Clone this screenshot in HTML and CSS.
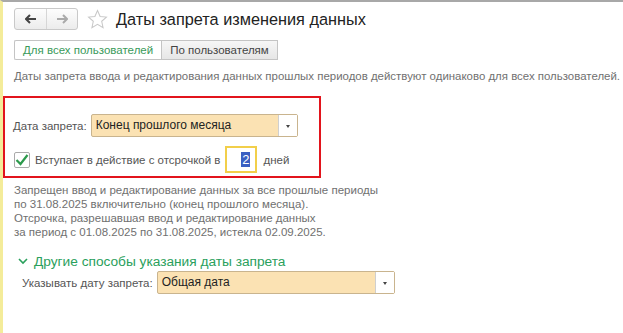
FILE: index.html
```html
<!DOCTYPE html>
<html lang="ru">
<head>
    <meta charset="UTF-8">
    <title>Даты запрета изменения данных</title>
    <link rel="stylesheet" href="styles.css">
</head>
<body>
    <div class="window">
        <div class="header">
            <div class="nav">
                <button class="nav-btn">
                    <svg width="12" height="10" viewBox="0 0 12 10"><path d="M1 5h10M5 1L1 5l4 4" stroke="#444" stroke-width="2" fill="none"/></svg>
                </button>
                <button class="nav-btn">
                    <svg width="12" height="10" viewBox="0 0 12 10"><path d="M1 5h10M7 1l4 4-4 4" stroke="#aaa" stroke-width="2" fill="none"/></svg>
                </button>
            </div>
            <svg class="star" width="21" height="21" viewBox="0 0 20 20"><path d="M10 1.5l2.5 5.6 6 .6-4.5 4 1.3 6-5.3-3.1-5.3 3.1 1.3-6-4.5-4 6-.6z" fill="none" stroke="#c8c8c8" stroke-width="1"/></svg>
            <h1 class="title">Даты запрета изменения данных</h1>
        </div>

        <div class="tabs">
            <div class="tab active">Для всех пользователей</div>
            <div class="tab">По пользователям</div>
        </div>

        <p class="note">Даты запрета ввода и редактирования данных прошлых периодов действуют одинаково для всех пользователей.</p>

        <!-- выделенный блок -->
        <div class="highlight">
            <div class="row">
                <span class="label">Дата запрета:</span>
                <div class="select wide">
                    <span class="select-text">Конец прошлого месяца</span>
                    <span class="select-btn"><i class="arrow"></i></span>
                </div>
            </div>
            <div class="row delay">
                <span class="checkbox">
                    <svg width="14" height="12" viewBox="0 0 14 12"><path d="M1.5 6l4 4 7-9" stroke="#2c9a4c" stroke-width="2.2" fill="none"/></svg>
                </span>
                <span class="label">Вступает в действие с отсрочкой в</span>
                <div class="days"><span class="sel">2</span></div>
                <span class="label">дней</span>
            </div>
        </div>

        <div class="info">
            <p>Запрещен ввод и редактирование данных за все прошлые периоды<br>по 31.08.2025 включительно (конец прошлого месяца).</p>
            <p>Отсрочка, разрешавшая ввод и редактирование данных<br>за период с 01.08.2025 по 31.08.2025, истекла 02.09.2025.</p>
        </div>

        <div class="group">
            <div class="group-title">
                <svg width="10" height="7" viewBox="0 0 10 7"><path d="M1 1l4 4 4-4" stroke="#2aa05c" stroke-width="1.6" fill="none"/></svg>
                Другие способы указания даты запрета
            </div>
            <div class="row">
                <span class="label">Указывать дату запрета:</span>
                <div class="select long">
                    <span class="select-text">Общая дата</span>
                    <span class="select-btn"><i class="arrow"></i></span>
                </div>
            </div>
        </div>
    </div>
</body>
</html>
```

FILE: styles.css
```css
body {
    margin: 0;
    font-family: "Liberation Sans", Arial, sans-serif;
    background: #fff;
    color: #444;
}
.window {
    width: 623px;
    height: 333px;
    box-sizing: border-box;
    border-top: 2px solid #a8a8a8;
    border-left: 3px solid #f4ec9a;
    padding: 7px 0 0 11px;
    overflow: hidden;
}
.header {
    display: flex;
    align-items: center;
    height: 20px;
}
.nav {
    display: flex;
    border: 1px solid #c9c9c9;
    border-radius: 3px;
    background: linear-gradient(#fdfdfd, #ececec);
}
.nav-btn {
    width: 31px;
    height: 20px;
    border: 0;
    background: none;
    padding: 0;
    display: flex;
    align-items: center;
    justify-content: center;
}
.nav-btn + .nav-btn {
    border-left: 1px solid #d6d6d6;
}
.star {
    margin-left: 9px;
}
.title {
    margin: 0 0 0 8px;
    font-size: 16.3px;
    font-weight: normal;
    color: #222;
}
.tabs {
    display: flex;
    margin-top: 11px;
}
.tab {
    height: 18px;
    line-height: 18px;
    padding: 0 8px;
    font-size: 11.5px;
    color: #444;
    background: linear-gradient(#f6f6f6, #e6e6e6);
    border: 1px solid #c4c4c4;
}
.tab.active {
    background: #fff;
    color: #3a9a5a;
    border-right: 0;
    border-radius: 2px 0 0 2px;
}
.note {
    margin: 10px 0 0;
    font-size: 11.45px;
    color: #707070;
    white-space: nowrap;
}
.highlight {
    margin: 14px 0 0 -11px;
    width: 306px;
    border: 2px solid #e2141c;
    padding: 16px 0 3px 8px;
}
.row {
    display: flex;
    align-items: center;
    font-size: 11.5px;
}
.label {
    color: #555;
}
.select {
    display: flex;
    height: 21px;
    margin-left: 4px;
    border: 1px solid #c9b48e;
    border-radius: 2px;
    background: #fbe2b3;
}
.select.wide {
    width: 205px;
}
.select.long {
    width: 239px;
}
.select-text {
    flex: 1;
    line-height: 21px;
    padding-left: 4px;
    font-size: 12px;
    color: #222;
}
.select-btn {
    width: 18px;
    background: #fff;
    border-left: 1px solid #cfcfcf;
    display: flex;
    align-items: center;
    justify-content: center;
}
.arrow {
    border: 2.5px solid transparent;
    border-top: 3px solid #444;
    margin-top: 3px;
}
.delay {
    margin-top: 9px;
}
.checkbox {
    width: 14px;
    height: 14px;
    border: 1px solid #aaa;
    border-radius: 2px;
    background: #fff;
    margin: 0 5px 0 1px;
    display: flex;
    align-items: center;
    justify-content: center;
}
.days {
    width: 32px;
    height: 27px;
    margin: 0 6px 0 5px;
    border: 2px solid #f2cf4a;
    background: #fff;
    display: flex;
    align-items: center;
    justify-content: flex-end;
    padding-right: 5px;
    box-sizing: border-box;
}
.sel {
    background: #3a5fc2;
    color: #fff;
    font-size: 13px;
    line-height: 15px;
    padding: 0 1px;
}
.info {
    margin-top: 5px;
    font-size: 11.5px;
    color: #707070;
    line-height: 14px;
}
.info p {
    margin: 0;
}
.group {
    margin-top: 15px;
}
.group-title {
    display: flex;
    align-items: center;
    gap: 6px;
    padding-left: 4px;
    font-size: 13.7px;
    color: #2aa05c;
}
.group .row {
    margin: 2px 0 0 8px;
}
.group .select.long {
    width: 236px;
}
```
